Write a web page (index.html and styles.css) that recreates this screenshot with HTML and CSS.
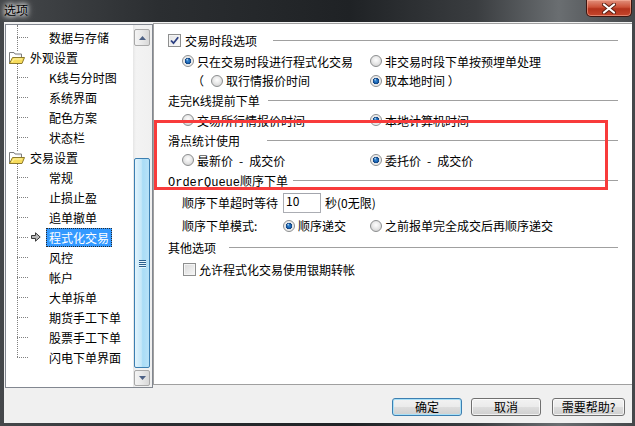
FILE: index.html
```html
<!DOCTYPE html>
<html lang="zh-CN">
<head>
  <meta charset="UTF-8" />
  <title>选项</title>
  <link rel="stylesheet" href="styles.css">
</head>
<body>
  <div class="window">
    <div class="titlebar">
      <span class="title">选项</span>
      <div class="close">
        <svg width="14" height="11" viewBox="0 0 14 11">
          <path d="M2 1.5 L12 9.5 M12 1.5 L2 9.5" stroke="#5a1e12" stroke-width="4" stroke-linecap="round"/>
          <path d="M2 1.5 L12 9.5 M12 1.5 L2 9.5" stroke="#fff" stroke-width="2.2" stroke-linecap="round"/>
        </svg>
      </div>
    </div>

    <div class="client">
      <div class="main">
        <div class="tree">
          <ul class="nodes">
            <li class="node"><span class="branch"></span><span class="slot"></span><span class="label">数据与存储</span></li>
            <li class="node root">
              <svg class="folder" width="16" height="13" viewBox="0 0 16 13">
                <path d="M0.5 1.5 H5 L6 3 H12.5 V6" fill="#f4f4f4" stroke="#7d7d7d"/>
                <path d="M0.5 1.5 V12.5 H13" fill="none" stroke="#7d7d7d"/>
                <path d="M0.5 12.5 L3.5 6.5 H15.5 L13 12.5 Z" fill="#f7dc5c" stroke="#8c7a2c"/>
                <path d="M3 11 L5 8 H13" fill="none" stroke="#fff3a8"/>
              </svg>
              <span class="label">外观设置</span>
            </li>
            <li class="node"><span class="branch"></span><span class="slot"></span><span class="label">K线与分时图</span></li>
            <li class="node"><span class="branch"></span><span class="slot"></span><span class="label">系统界面</span></li>
            <li class="node"><span class="branch"></span><span class="slot"></span><span class="label">配色方案</span></li>
            <li class="node"><span class="branch"></span><span class="slot"></span><span class="label">状态栏</span></li>
            <li class="node root">
              <svg class="folder" width="16" height="13" viewBox="0 0 16 13">
                <path d="M0.5 1.5 H5 L6 3 H12.5 V6" fill="#f4f4f4" stroke="#7d7d7d"/>
                <path d="M0.5 1.5 V12.5 H13" fill="none" stroke="#7d7d7d"/>
                <path d="M0.5 12.5 L3.5 6.5 H15.5 L13 12.5 Z" fill="#f7dc5c" stroke="#8c7a2c"/>
                <path d="M3 11 L5 8 H13" fill="none" stroke="#fff3a8"/>
              </svg>
              <span class="label">交易设置</span>
            </li>
            <li class="node"><span class="branch"></span><span class="slot"></span><span class="label">常规</span></li>
            <li class="node"><span class="branch"></span><span class="slot"></span><span class="label">止损止盈</span></li>
            <li class="node"><span class="branch"></span><span class="slot"></span><span class="label">追单撤单</span></li>
            <li class="node">
              <span class="branch"></span>
              <span class="slot">
                <svg width="10" height="10" viewBox="0 0 10 10">
                  <path d="M0.5 3.5 H4.5 V0.8 L9.2 5 L4.5 9.2 V6.5 H0.5 Z" fill="#b9b9b9" stroke="#3a3a3a"/>
                </svg>
              </span>
              <span class="label selected">程式化交易</span>
            </li>
            <li class="node"><span class="branch"></span><span class="slot"></span><span class="label">风控</span></li>
            <li class="node"><span class="branch"></span><span class="slot"></span><span class="label">帐户</span></li>
            <li class="node"><span class="branch"></span><span class="slot"></span><span class="label">大单拆单</span></li>
            <li class="node"><span class="branch"></span><span class="slot"></span><span class="label">期货手工下单</span></li>
            <li class="node"><span class="branch"></span><span class="slot"></span><span class="label">股票手工下单</span></li>
            <li class="node"><span class="branch"></span><span class="slot"></span><span class="label">闪电下单界面</span></li>
          </ul>

          <div class="scrollbar">
            <div class="sb-btn">
              <svg width="7" height="4" viewBox="0 0 7 4"><path d="M0 4 L3.5 0 L7 4 Z" fill="#4d6185"/></svg>
            </div>
            <div class="sb-track"></div>
            <div class="sb-thumb">
              <span class="grip"></span><span class="grip"></span><span class="grip"></span><span class="grip"></span>
            </div>
            <div class="sb-btn down">
              <svg width="7" height="4" viewBox="0 0 7 4"><path d="M0 0 L3.5 4 L7 0 Z" fill="#4d6185"/></svg>
            </div>
          </div>
        </div>

        <section class="page">
          <div class="hd h21 hd-trade">
            <span class="check on">
              <svg width="11" height="11" viewBox="0 0 11 11"><path d="M2 5.5 L4.5 8.2 L9.2 2.2" fill="none" stroke="#2c3f82" stroke-width="1.8"/></svg>
            </span>
            <span class="legend">交易时段选项</span>
            <span class="rule"></span>
          </div>
          <div class="opts">
            <label class="opt"><span class="radio on"></span>只在交易时段进行程式化交易</label>
            <label class="opt"><span class="radio"></span>非交易时段下单按预埋单处理</label>
          </div>
          <div class="opts h19">
            <label class="opt"><span class="paren">（</span><span class="radio"></span>取行情报价时间</label>
            <label class="opt"><span class="radio on"></span>取本地时间 ）</label>
          </div>

          <div class="hd hd-kline">
            <span class="legend">走完K线提前下单</span>
            <span class="rule"></span>
          </div>
          <div class="opts">
            <label class="opt"><span class="radio"></span>交易所行情报价时间</label>
            <label class="opt"><span class="radio on"></span>本地计算机时间</label>
          </div>

          <div class="hd hd-slip">
            <span class="legend">滑点统计使用</span>
            <span class="rule"></span>
          </div>
          <div class="opts">
            <label class="opt"><span class="radio"></span>最新价&ensp;-&ensp;成交价</label>
            <label class="opt"><span class="radio on"></span>委托价&ensp;-&ensp;成交价</label>
          </div>

          <div class="hd h21 hd-queue">
            <span class="legend"><span class="mono">OrderQueue</span>顺序下单</span>
            <span class="rule"></span>
          </div>
          <div class="line h23">
            <span>顺序下单超时等待</span>
            <span class="field">10</span>
            <span>秒(0无限)</span>
          </div>
          <div class="line h23">
            <span class="caption">顺序下单模式:</span>
            <label class="opt mode"><span class="radio on"></span>顺序递交</label>
            <label class="opt"><span class="radio"></span>之前报单完全成交后再顺序递交</label>
          </div>

          <div class="hd h21 hd-other">
            <span class="legend">其他选项</span>
            <span class="rule"></span>
          </div>
          <div class="line h22 single">
            <span class="check"></span>
            <span>允许程式化交易使用银期转帐</span>
          </div>

          <div class="mark"></div>
        </section>
      </div>

      <div class="buttons">
        <button class="btn default">确定</button>
        <button class="btn">取消</button>
        <button class="btn wide">需要帮助?</button>
      </div>
    </div>
  </div>
</body>
</html>
```

FILE: styles.css
```css
* {
  box-sizing: border-box;
}

body {
  margin: 0;
  width: 635px;
  height: 426px;
  overflow: hidden;
  font-family: "Noto Sans CJK SC", "Noto Sans", sans-serif;
  font-size: 12px;
  color: #000;
  background: #1d1f21;
}

.window {
  height: 426px;
  display: flex;
  flex-direction: column;
  background: linear-gradient(90deg, #45484b 0%, #2b2e31 25%, #1f2225 55%, #3a3d40 75%, #6a6e71 88%, #44474a 100%);
}

/* title bar */
.titlebar {
  height: 22px;
  display: flex;
  justify-content: space-between;
  align-items: flex-start;
  padding-left: 4px;
}

.title {
  line-height: 20px;
  color: #000;
  text-shadow: 0 0 4px #fff, 0 0 6px #fff, 0 0 8px rgba(255, 255, 255, 0.7);
}

.close {
  width: 46px;
  height: 17px;
  margin-right: 3px;
  border: 1px solid #3d1610;
  border-top: none;
  border-radius: 0 0 5px 5px;
  background: linear-gradient(#e2907c, #cc5138 45%, #b3321b 55%, #c5472d);
  box-shadow: inset 0 0 0 1px rgba(255, 190, 170, 0.5);
  display: flex;
  align-items: center;
  justify-content: center;
}

/* client area */
.client {
  flex: 1;
  margin: 0 3px 3px 4px;
  background: #f0f0f0;
  display: flex;
  flex-direction: column;
}

.main {
  height: 366px;
  display: flex;
  align-items: flex-start;
}

/* tree */
.tree {
  width: 148px;
  height: 364px;
  margin: 2px 0 0 1px;
  border: 1px solid #828790;
  background: #fff;
  display: flex;
}

.nodes {
  flex: 1;
  margin: 0;
  padding: 2px 0 0;
  list-style: none;
  position: relative;
}

.nodes::before {
  content: "";
  position: absolute;
  left: 11px;
  top: 0;
  height: 332px;
  border-left: 1px dotted #808080;
}

.node {
  height: 20px;
  display: flex;
  align-items: center;
}

.branch {
  width: 11px;
  margin-left: 11px;
  border-top: 1px dotted #808080;
}

.slot {
  width: 18px;
  display: flex;
  padding-left: 3px;
}

.label {
  padding: 0 2px;
  line-height: 17px;
  border: 1px dotted transparent;
  white-space: nowrap;
}

.label.selected {
  background: #3399ff;
  color: #fff;
  border-color: #2a2a2a;
}

.root .folder {
  position: relative;
  margin-left: 3px;
  background: #fff;
}

.root .label {
  margin-left: 2px;
}

/* scrollbar */
.scrollbar {
  width: 19px;
  padding: 4px 2px 1px 1px;
  display: flex;
  flex-direction: column;
  background: linear-gradient(90deg, #e6e6e6, #f3f3f3 3px, #f0f0f0);
}

.sb-btn {
  height: 17px;
  border: 1px solid #a9a9a9;
  border-radius: 2px;
  background: linear-gradient(90deg, #f4f4f4, #e8e8e8 50%, #d8d8d8);
  display: flex;
  align-items: center;
  justify-content: center;
}

.sb-btn.down {
  height: 16px;
  margin-top: 2px;
}

.sb-track {
  height: 112px;
}

.sb-thumb {
  height: 210px;
  border: 1px solid #3c7fb1;
  border-radius: 2px;
  background: linear-gradient(90deg, #e3f4fc, #c4e7f9 45%, #a9dcf6 55%, #b8e2f8);
  display: flex;
  flex-direction: column;
  align-items: center;
  justify-content: center;
  gap: 1px;
}

.grip {
  width: 7px;
  height: 1px;
  background: #2a5f8e;
  box-shadow: 0 1px 0 #e8f6fd;
}

/* options page */
.page {
  position: relative;
  width: 479px;
  height: 362px;
  margin-top: 1px;
  border: 1px solid #a0a0a0;
  border-right: none;
  background: #fff;
  padding: 6px 14px 0 14px;
}

.hd {
  height: 20px;
  display: flex;
  align-items: center;
  white-space: nowrap;
}

.rule {
  flex: 1;
  height: 1px;
  background: #a0a0a0;
}

.hd-trade .legend { margin-left: 4px; }
.hd-trade .rule { margin-left: 16px; }
.hd-kline .rule { margin-left: 8px; }
.hd-slip .rule { margin-left: 27px; }
.hd-queue .rule { margin-left: 5px; }
.hd-other .rule { margin-left: 13px; }

.mono {
  font-family: "Liberation Mono", "DejaVu Sans Mono", monospace;
  font-size: 12px;
}

.opts {
  height: 20px;
  padding-left: 14px;
  display: grid;
  grid-template-columns: 188px auto;
  align-items: center;
}

.opt {
  display: flex;
  align-items: center;
  gap: 3px;
  white-space: nowrap;
}

.paren {
  width: 22px;
  margin-right: 4px;
  text-align: right;
}

.line {
  height: 20px;
  padding-left: 14px;
  display: flex;
  align-items: center;
  white-space: nowrap;
}

.line.single {
  padding-left: 15px;
  gap: 3px;
}

.caption {
  width: 101px;
}

.opt.mode {
  width: 87px;
}

.field {
  width: 38px;
  height: 20px;
  margin: 0 4px 0 5px;
  padding: 0 0 0 2px;
  border: 1px solid #abadb3;
  border-top-color: #a3a6ad;
  line-height: 13px;
}

.h19 { height: 19px; }
.h21 { height: 21px; }
.h22 { height: 22px; }
.h23 { height: 23px; }

/* win7 controls */
.radio {
  width: 12px;
  height: 12px;
  flex: none;
  border: 1px solid #8c8e8f;
  border-radius: 50%;
  background: radial-gradient(circle at 50% 40%, #fdfdfd 0, #ececec 3px, #d6d6d6 6px);
}

.radio.on {
  background:
    radial-gradient(circle at 42% 36%, rgba(210, 240, 255, 0.95) 0, rgba(210, 240, 255, 0) 1.4px),
    radial-gradient(circle at 50% 50%, #3b8fd8 0, #1d66b4 1.8px, #0f3f7c 3px, #e4e4e4 3.4px, #f8f8f8 6px);
}

.check {
  width: 13px;
  height: 13px;
  flex: none;
  border: 1px solid #8e8f8f;
  background: linear-gradient(135deg, #d9d9d9, #f7f7f7);
  box-shadow: inset 0 0 0 1px #f4f4f4;
  display: flex;
  align-items: center;
  justify-content: center;
}

.check.on {
  background: linear-gradient(135deg, #e4e4e4, #fafafa);
}

.mark {
  position: absolute;
  left: 0;
  top: 96px;
  width: 454px;
  height: 70px;
  border: 3px solid #f83b3b;
  pointer-events: none;
}

/* buttons */
.buttons {
  display: flex;
  justify-content: flex-end;
  padding: 10px 7px 0 0;
}

.btn {
  width: 70px;
  height: 18px;
  margin-left: 9px;
  padding: 0;
  font: inherit;
  line-height: 16px;
  color: #000;
  border: 1px solid #707070;
  border-radius: 3px;
  background: linear-gradient(#f2f2f2, #ebebeb 48%, #dddddd 52%, #cfcfcf);
  box-shadow: inset 0 0 0 1px rgba(255, 255, 255, 0.7);
}

.btn.default {
  border-color: #3c7fb1;
  box-shadow: inset 0 0 0 1px #a9e0f7;
}

.btn.wide {
  width: 73px;
  margin-left: 11px;
}
```
